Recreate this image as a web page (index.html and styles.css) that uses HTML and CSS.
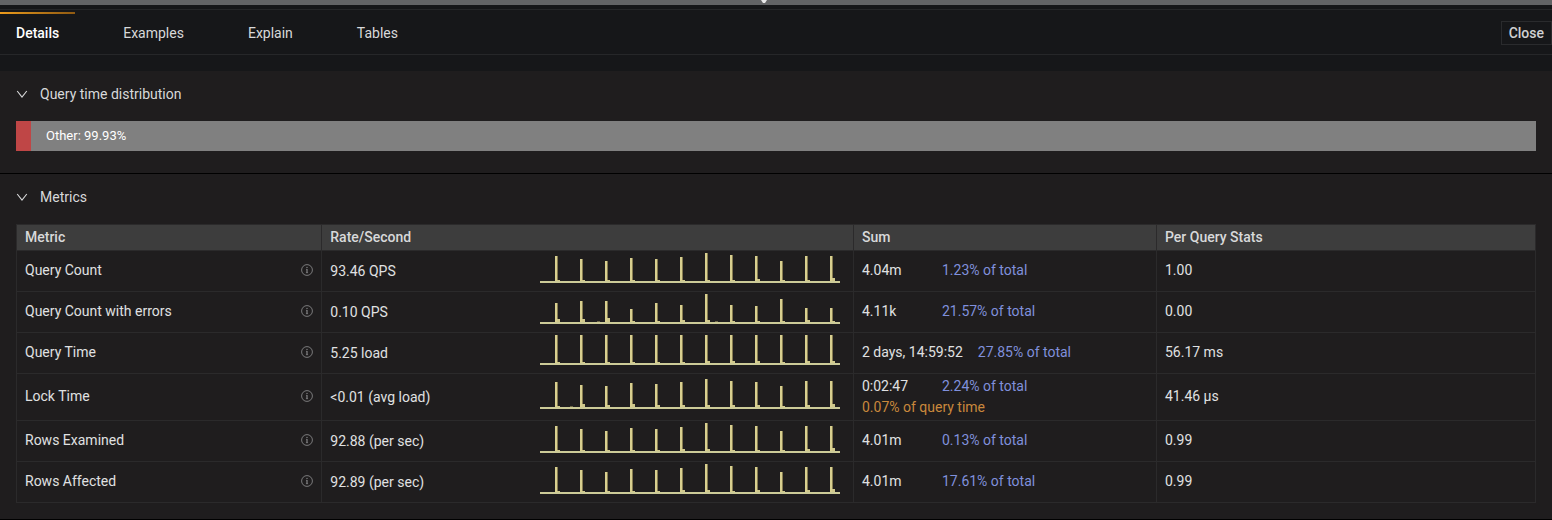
FILE: index.html
```html
<!DOCTYPE html>
<html lang="en">
<head>
<meta charset="utf-8">
<title>Query details</title>
<link rel="stylesheet" href="styles.css">
</head>
<body>
<svg class="defs" aria-hidden="true">
  <symbol id="info" viewBox="0 0 12 12"><circle cx="6" cy="6" r="5.4" fill="none" stroke="currentColor" stroke-width="0.9"/><path d="M6 5v4" fill="none" stroke="currentColor" stroke-width="1.2"/><path d="M5 5.300h1M4.900 8.700h2.200" fill="none" stroke="currentColor" stroke-width="0.6"/><circle cx="6" cy="3.400" r="0.700" fill="currentColor"/></symbol>
  <symbol id="chevron" viewBox="0 0 12 12"><path d="M1.200 3L6 9L10.800 3" fill="none" stroke="currentColor" stroke-width="1.1"/></symbol>
</svg>
<div class="resizer"><svg class="grip" viewBox="0 0 6 3" aria-hidden="true"><path d="M0 0h6L4 3H2z" fill="#e8e8e8"/></svg></div>
<header class="topbar">
  <nav class="tabs">
    <button type="button" class="tab active">Details</button>
    <button type="button" class="tab">Examples</button>
    <button type="button" class="tab">Explain</button>
    <button type="button" class="tab">Tables</button>
  </nav>
  <button type="button" class="close">Close</button>
</header>
<main class="content">
  <section class="panel distribution">
    <button type="button" class="panel-head" aria-expanded="true"><svg class="chevron"><use href="#chevron"/></svg>Query time distribution</button>
    <div class="panel-body">
      <div class="dist-bar"><span class="dist-lock"></span><span class="dist-other">Other: 99.93%</span></div>
    </div>
  </section>
  <section class="panel">
    <button type="button" class="panel-head" aria-expanded="true"><svg class="chevron"><use href="#chevron"/></svg>Metrics</button>
    <div class="panel-body">
      <table class="metrics">
        <colgroup><col class="c-metric"><col class="c-rate"><col class="c-sum"><col class="c-stats"></colgroup>
        <thead><tr><th scope="col">Metric</th><th scope="col">Rate/Second</th><th scope="col">Sum</th><th scope="col">Per Query Stats</th></tr></thead>
        <tbody>
          <tr>
            <td><div class="name">Query Count<svg class="info"><use href="#info"/></svg></div></td>
            <td class="centered"><div class="rate">93.46 QPS<svg class="spark" data-bars="25,22,20,23,22,24,28,26,25,20,25,25" data-tails="1,1,1,1,1,1,1,1,2,1,1,3"></svg></div></td>
            <td><div class="sum"><span class="value">4.04m</span><span class="share">1.23% of total</span></div></td>
            <td>1.00</td>
          </tr>
          <tr>
            <td><div class="name">Query Count with errors<svg class="info"><use href="#info"/></svg></div></td>
            <td class="centered"><div class="rate">0.10 QPS<svg class="spark" data-bars="19,21,21,13,19,17,28,17,16,23,14,14" data-tails="3,3,4,1,1,2,2,1,1,1,2,1" data-blips="57,175"></svg></div></td>
            <td><div class="sum"><span class="value">4.11k</span><span class="share">21.57% of total</span></div></td>
            <td>0.00</td>
          </tr>
          <tr>
            <td><div class="name">Query Time<svg class="info"><use href="#info"/></svg></div></td>
            <td class="centered"><div class="rate">5.25 load<svg class="spark" data-bars="28,28,28,28,28,28,28,28,28,28,28,28" data-tails="1,1,1,1,1,1,2,2,2,1,2,2"></svg></div></td>
            <td><div class="sum"><span class="value">2 days, 14:59:52</span><span class="share">27.85% of total</span></div></td>
            <td>56.17 ms</td>
          </tr>
          <tr>
            <td><div class="name">Lock Time<svg class="info"><use href="#info"/></svg></div></td>
            <td class="centered"><div class="rate">&lt;0.01 (avg load)<svg class="spark" data-bars="25,22,21,24,23,25,28,26,25,21,26,26" data-tails="1,3,2,3,2,2,2,2,2,1,2,3" data-blips="30"></svg></div></td>
            <td class="centered"><div class="sum"><span class="value">0:02:47</span><span class="share">2.24% of total</span></div><div class="query-share">0.07% of query time</div></td>
            <td>41.46 µs</td>
          </tr>
          <tr>
            <td><div class="name">Rows Examined<svg class="info"><use href="#info"/></svg></div></td>
            <td class="centered"><div class="rate">92.88 (per sec)<svg class="spark" data-bars="25,22,20,23,22,24,28,26,25,20,25,25" data-tails="1,1,1,1,1,2,2,1,1,1,2,3"></svg></div></td>
            <td><div class="sum"><span class="value">4.01m</span><span class="share">0.13% of total</span></div></td>
            <td>0.99</td>
          </tr>
          <tr>
            <td><div class="name">Rows Affected<svg class="info"><use href="#info"/></svg></div></td>
            <td class="centered"><div class="rate">92.89 (per sec)<svg class="spark" data-bars="25,22,20,23,22,24,28,26,25,20,25,25" data-tails="1,1,1,1,1,2,2,1,2,1,2,3"></svg></div></td>
            <td><div class="sum"><span class="value">4.01m</span><span class="share">17.61% of total</span></div></td>
            <td>0.99</td>
          </tr>
        </tbody>
      </table>
    </div>
  </section>
</main>
<script src="sparkline.js"></script>
</body>
</html>
```
FILE: styles.css
```css
* { box-sizing: border-box; }
body {
  margin: 0;
  background: #161719;
  color: #e0e1e2;
  font: 400 14px/21px Roboto, "Liberation Sans", sans-serif;
}
button {
  font: inherit;
  color: inherit;
  background: none;
  border: 0;
  padding: 0;
}
.defs { position: absolute; width: 0; height: 0; }
.resizer {
  display: flex;
  justify-content: center;
  height: 5px;
  padding-right: 24px;
  background: #636466;
}
.grip { width: 6px; height: 3px; }
.topbar {
  display: flex;
  justify-content: space-between;
  align-items: center;
  margin-top: 4px;
  border-top: 1px solid #262729;
  border-bottom: 1px solid #262729;
  padding-top: 2px;
}
.tabs { display: flex; gap: 32px; }
.tab {
  height: 42px;
  padding: 0 16px 2px;
  border-top: 2px solid transparent;
  color: #d8d9da;
}
.tab.active {
  color: #fff;
  font-weight: 500;
  border-image: linear-gradient(90deg, #eb9b1c, #8f5a12) 2 0 0 0;
}
.close {
  height: 24px;
  padding: 0 7px;
  border: 1px solid #2a2b2d;
  color: #d0d1d2;
  font-weight: 500;
  line-height: 22px;
}
.content { padding-top: 16px; }
.panel {
  background: #1f1d1e;
  border-bottom: 1px solid #000;
}
.panel-head {
  display: flex;
  align-items: center;
  gap: 12px;
  width: 100%;
  padding: 12px 16px;
  line-height: 22px;
  color: #d8d9da;
}
.chevron { width: 12px; height: 12px; }
.panel-body { padding: 4px 16px 16px; }
.distribution .panel-body { padding-bottom: 22px; }
.dist-bar { display: flex; height: 30px; font-size: 13px; line-height: 30px; color: #fff; }
.dist-lock { width: 15px; background: #bf4646; }
.dist-other { flex: 1; padding-left: 15px; background: #808080; }
.metrics {
  width: 100%;
  table-layout: fixed;
  border-collapse: collapse;
}
.c-metric { width: 20.1%; }
.c-rate { width: 35%; }
.c-sum { width: 19.95%; }
.c-stats { width: 24.95%; }
.metrics th, .metrics td {
  border: 1px solid #2b2a2b;
  text-align: left;
}
.metrics th { padding: 2px 8px; background: #3d3d3d; color: #d8d9da; font-weight: 500; }
.metrics td { padding: 1px 8px 3px; }
.metrics .centered { padding: 2px 8px; }
.name, .rate {
  display: flex;
  align-items: center;
  justify-content: space-between;
}
.info { width: 12px; height: 12px; color: #858586; }
.rate { padding-right: 5px; }
.spark { width: 300px; height: 36px; }
.sum { display: flex; gap: 15px; }
.value { min-width: 65px; }
.share { color: #8090dc; }
.query-share { color: #c9883c; }
```
FILE: sparkline.js
```js
const NS = "http://www.w3.org/2000/svg";
const BASE = 28;
const STEP = 25;

function rect(svg, x, height, width, fill) {
  const el = document.createElementNS(NS, "rect");
  el.setAttribute("x", x);
  el.setAttribute("y", BASE - height);
  el.setAttribute("width", width);
  el.setAttribute("height", height);
  el.setAttribute("fill", fill);
  svg.appendChild(el);
  return el;
}

const numbers = (text) => (text ? text.split(",").map(Number) : []);

document.querySelectorAll(".spark").forEach((svg) => {
  const tails = numbers(svg.dataset.tails);
  numbers(svg.dataset.bars).forEach((height, i) => {
    const x = 15 + STEP * i;
    rect(svg, x, height, 2, "#d8cf90");
    rect(svg, x + 2, height, 1, "#857b50");
    rect(svg, x + 2, tails[i], 3, "#cfc78b");
  });
  numbers(svg.dataset.blips).forEach((x) => rect(svg, x, 1, 3, "#6d6748"));
  const axis = rect(svg, 0, 0, 300, "#cdcb98");
  axis.setAttribute("height", 2);
});
```
